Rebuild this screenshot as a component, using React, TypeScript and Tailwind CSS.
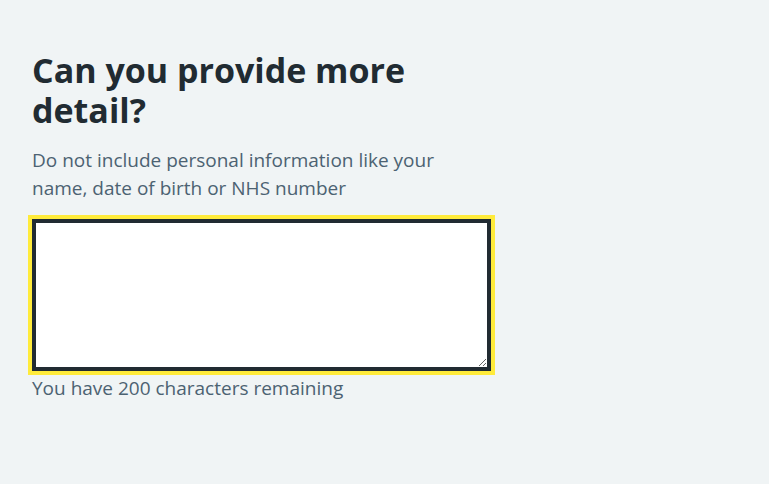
const App = () => {
  return (
    <div className="min-h-[484px] w-full bg-[#f0f4f5] px-8 pt-[50px] font-['Open_Sans',sans-serif] text-[#212b32]">
      <div className="w-[459px]">
        <label htmlFor="more-detail" className="block">
          <h1 className="mb-4 text-[34px] font-bold leading-[40px]">
            Can you provide more detail?
          </h1>
        </label>
        <div className="mb-[17px] text-[19px] leading-[28px] text-[#4c6272]">
          Do not include personal information like your name, date of birth or NHS number
        </div>
        <textarea
          id="more-detail"
          className="block h-[152px] w-[459px] border-4 border-[#212b32] bg-white outline-none ring-4 ring-[#ffeb3b]"
        />
        <div className="mt-[3px] text-[19px] leading-[28px] text-[#4c6272]">
          You have 200 characters remaining
        </div>
      </div>
    </div>
  );
};

export default App;
